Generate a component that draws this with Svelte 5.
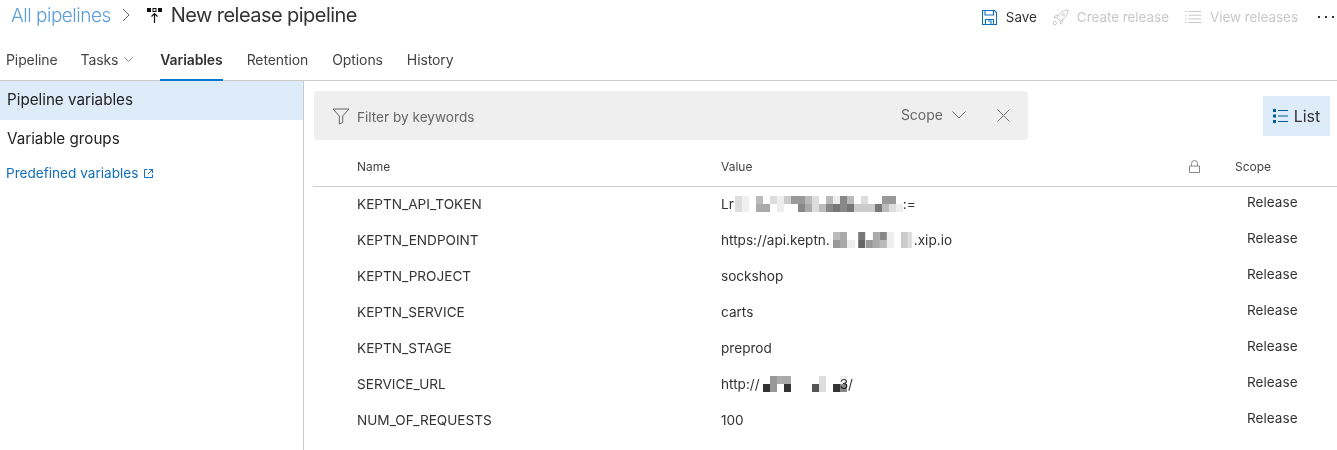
<script>
	// one mosaic cell per entry: [column, row, grey, optional width]
	const cell = 7;

	const tokenMask = [
		[0,0,'#ddd'],[1,0,'#f0f0f0'],[3,0,'#bbb'],[5,0,'#ddd'],[6,0,'#eee'],[7,0,'#ccc'],[8,0,'#999'],[9,0,'#999'],[10,0,'#bbb'],[11,0,'#ddd'],[13,0,'#bbb'],[14,0,'#eee'],[15,0,'#888'],[16,0,'#bbb'],[18,0,'#ddd'],[21,0,'#999'],[22,0,'#999'],
		[0,1,'#ddd'],[1,1,'#f0f0f0'],[3,1,'#aaa'],[4,1,'#aaa'],[6,1,'#eee'],[9,1,'#888'],[10,1,'#aaa'],[11,1,'#ddd'],[12,1,'#bbb'],[13,1,'#888'],[14,1,'#777'],[15,1,'#888'],[16,1,'#777'],[17,1,'#ccc'],[18,1,'#ccc'],[19,1,'#ccc'],[20,1,'#777'],[21,1,'#bbb'],[22,1,'#ddd'],[23,1,'#eee']
	];
	const endpointMask = [
		[0,0,'#bbb'],[1,0,'#aaa'],[3.6,0,'#777'],[5.7,0,'#aaa'],[6.7,0,'#888'],[7.7,0,'#eee'],[9.7,0,'#ccc'],[10.7,0,'#ddd',4],
		[0,1,'#999'],[1,1,'#aaa'],[2,1,'#eee'],[2.6,1,'#eee',4],[3.6,1,'#666'],[4.7,1,'#999'],[5.7,1,'#aaa'],[6.7,1,'#bbb'],[7.7,1,'#eee'],[9.7,1,'#ccc'],[10.7,1,'#ddd',4]
	];
	const urlMask = [
		[1,0,'#999'],[2,0,'#aaa'],[3,0,'#aaa'],[8,0,'#ddd'],[11,0,'#eee'],
		[0,1,'#333'],[1,1,'#999'],[3,1,'#333'],[7,1,'#555'],[8,1,'#ddd'],[10,1,'#333'],[11,1,'#888']
	];

	const rows = [
		{ name: 'KEPTN_API_TOKEN', before: 'Lr', mask: tokenMask, width: 168, lead: 1, after: ':=' },
		{ name: 'KEPTN_ENDPOINT', before: 'https://api.keptn.', mask: endpointMask, width: 81, lead: 3, after: '.xip.io' },
		{ name: 'KEPTN_PROJECT', before: 'sockshop' },
		{ name: 'KEPTN_SERVICE', before: 'carts' },
		{ name: 'KEPTN_STAGE', before: 'preprod' },
		{ name: 'SERVICE_URL', before: 'http://', mask: urlMask, width: 77, lead: 3, after: '3/' },
		{ name: 'NUM_OF_REQUESTS', before: '100' }
	];
</script>

<div class="page">
	<header class="top">
		<div class="crumbs">
			<a class="all">All pipelines</a>
			<svg class="sep" width="8" height="14" viewBox="0 0 8 14"><path d="M1 1l6 6-6 6" fill="none" stroke="#666" stroke-width="1"/></svg>
			<svg class="pipe-icon" width="15" height="15" viewBox="0 0 15 15">
				<path d="M0 0h4v4H0zM5.500 0h4v4h-4zM11 0h4v4h-4z" fill="#111"/>
				<path d="M6.500 1h2v2h-2z" fill="#fff"/>
				<path d="M7.500 15V6M4.500 8.500l3-3 3 3" fill="none" stroke="#111" stroke-width="1.200"/>
			</svg>
			<h1>New release pipeline</h1>
		</div>
		<div class="actions">
			<button class="act">
				<svg width="15" height="15" viewBox="0 0 15 15" fill="none" stroke="#106ebe" stroke-width="1.100">
					<path d="M.5.500h12l2 2v12H.5z"/>
					<path d="M3 .500v4.500h8.500V.500M3.500 14.500V9.500h8v5M6 11h3v3.500"/>
				</svg>
				<span>Save</span>
			</button>
			<button class="act off">
				<svg width="17" height="17" viewBox="0 0 17 17" fill="none" stroke="#c8c8c8" stroke-width="1">
					<path d="M16 1c-4 .2-7 1.800-9.500 5.200L4.800 8.800l3.400 3.400 2.600-1.700C14.200 8 15.800 5 16 1z"/>
					<circle cx="11.300" cy="5.700" r="1.200"/>
					<path d="M6.500 6.200 3.500 6.500 2 8.500l2.800.3M10.800 10.500l-.3 3-2 1.500-.3-2.800"/>
					<circle cx="2.800" cy="14.200" r="1.700"/>
				</svg>
				<span>Create release</span>
			</button>
			<button class="act off">
				<svg width="16" height="12" viewBox="0 0 16 12" stroke="#c8c8c8" stroke-width="1">
					<path d="M0 .5h1.500M3.500.5H16M0 4.200h1.500M3.500 4.200H16M0 7.900h1.500M3.500 7.900H16M0 11.500h1.500M3.500 11.500H16"/>
				</svg>
				<span>View releases</span>
			</button>
			<div class="dots"><i></i><i></i><i></i></div>
		</div>
	</header>

	<nav class="tabs">
		<a class="tab first">Pipeline</a>
		<a class="tab tasks">Tasks
			<svg width="9" height="5" viewBox="0 0 9 5"><path d="M.5.500l4 4 4-4" fill="none" stroke="#888" stroke-width="1"/></svg>
		</a>
		<a class="tab active">Variables</a>
		<a class="tab">Retention</a>
		<a class="tab">Options</a>
		<a class="tab">History</a>
	</nav>

	<div class="body">
		<aside class="side">
			<div class="side-item selected">Pipeline variables</div>
			<div class="side-item">Variable groups</div>
			<a class="predef">Predefined variables
				<svg width="9" height="9" viewBox="0 0 9 9" fill="none" stroke="#106ebe" stroke-width="1"><path d="M3.500.500H.5v8h8v-3M5 .500h3.500V4M8.500.500 4 5"/></svg>
			</a>
		</aside>

		<main class="content">
			<div class="toolbar">
				<div class="filter">
					<svg width="18" height="18" viewBox="0 0 18 18" fill="none" stroke="#666" stroke-width="1"><path d="M1 2h16l-6.300 7v6.500l-3.400 1.500V9z"/></svg>
					<span class="placeholder">Filter by keywords</span>
					<span class="scope-pick">Scope
						<svg width="14" height="8" viewBox="0 0 14 8"><path d="M.5.500 7 7l6.500-6.500" fill="none" stroke="#666" stroke-width="1"/></svg>
					</span>
					<svg class="close" width="13" height="13" viewBox="0 0 13 13"><path d="m.5.500 12 12m0-12-12 12" fill="none" stroke="#777" stroke-width="1"/></svg>
				</div>
				<button class="list">
					<svg width="15" height="14" viewBox="0 0 15 14" fill="#005a9e">
						<path d="M0 0h3v3H0zM0 5.500h3v3H0zM0 11h3v3H0zM5 1h10v1H5zM5 6.500h10v1H5zM5 12h10v1H5z"/>
					</svg>
					List
				</button>
			</div>

			<div class="table">
				<div class="row head">
					<span class="c-name">Name</span>
					<span class="c-value">Value</span>
					<span class="c-lock">
						<svg width="11" height="13" viewBox="0 0 11 13" fill="none" stroke="#888" stroke-width="1"><path d="M.5 6h10v6.500H.5zM2.500 6V3.500a3 3 0 0 1 6 0V6"/></svg>
					</span>
					<span class="c-scope">Scope</span>
				</div>
				<div class="rows">
					{#each rows as row}
						<div class="row">
							<span class="c-name">{row.name}</span>
							<span class="c-value">{row.before}{#if row.mask}<svg class="mask" width={row.width + row.lead} height="16" viewBox="0 0 {row.width + row.lead} 16">{#each row.mask as m}<rect x={row.lead + m[0] * cell} y={m[1] * 8} width={m[3] ?? cell} height="8" fill={m[2]}/>{/each}</svg>{/if}{row.after ?? ''}</span>
							<span class="c-lock"></span>
							<span class="c-release">Release</span>
						</div>
					{/each}
				</div>
			</div>
		</main>
	</div>
</div>

<style>
	:global(body) {
		margin: 0;
		background: #fff;
		font-family: Inter, "Liberation Sans", sans-serif;
		color: #333;
	}

	.page {
		height: 450px;
		display: flex;
		flex-direction: column;
		overflow: hidden;
	}

	.top {
		height: 30px;
		display: flex;
		align-items: center;
		justify-content: space-between;
		padding-left: 11px;
	}

	.crumbs {
		display: flex;
		align-items: center;
	}

	.all {
		font-size: 19px;
		font-weight: 300;
		letter-spacing: -0.5px;
		color: #5c9fd8;
	}

	.sep {
		margin-left: 11px;
	}

	.pipe-icon {
		margin-left: 17px;
	}

	h1 {
		margin: 0 0 0 9px;
		font-size: 20px;
		font-weight: 400;
		letter-spacing: -0.55px;
		color: #333;
	}

	.actions {
		display: flex;
		align-items: center;
		margin-top: 4px;
		padding-right: 3px;
	}

	.act {
		display: flex;
		align-items: center;
		gap: 9px;
		margin: 0 16px 0 0;
		padding: 0;
		border: 0;
		background: none;
		font: inherit;
		font-size: 13.4px;
		color: #333;
	}

	.act.off {
		color: #c8c8c8;
	}

	.act:nth-child(1) {
		margin-right: 15px;
	}

	.act:nth-child(2) {
		gap: 8px;
	}

	.act:nth-child(3) {
		margin-right: 20px;
	}

	.dots {
		display: flex;
		gap: 5px;
	}

	.dots i {
		width: 2px;
		height: 2px;
		background: #333;
	}

	.tabs {
		height: 51px;
		box-sizing: border-box;
		display: flex;
		align-items: stretch;
		gap: 24px;
		padding: 10px 0 0 6px;
		border-bottom: 1px solid #ccc;
	}

	.tab {
		display: flex;
		align-items: center;
		gap: 6px;
		font-size: 14px;
		letter-spacing: -0.1px;
		color: #444;
		border-bottom: 2px solid transparent;
		margin-bottom: -1px;
	}

	.tab.first {
		margin-right: -1px;
	}

	.tab.tasks {
		margin-right: 3px;
	}

	.tab.active {
		font-weight: 600;
		color: #333;
		border-bottom-color: #0078d4;
	}

	.body {
		flex: 1;
		display: flex;
		min-height: 0;
	}

	.side {
		width: 303px;
		flex: none;
		border-right: 1px solid #ccc;
	}

	.side-item {
		height: 39px;
		box-sizing: border-box;
		padding: 0 0 2px 7px;
		display: flex;
		align-items: center;
		font-size: 15.2px;
		color: #222;
	}

	.side-item.selected {
		background: #deecf9;
	}

	.predef {
		display: flex;
		align-items: center;
		gap: 6px;
		padding: 6px 0 0 6px;
		font-size: 13.6px;
		color: #106ebe;
	}

	.content {
		flex: 1;
		min-width: 0;
		padding-left: 9px;
	}

	.toolbar {
		display: flex;
		align-items: center;
		justify-content: space-between;
		padding: 10px 7px 0 1px;
	}

	.filter {
		width: 714px;
		height: 49px;
		box-sizing: border-box;
		display: flex;
		align-items: center;
		padding: 0 18px;
		background: #efefef;
		border-radius: 4px;
	}

	.placeholder {
		margin-left: 7px;
		flex: 1;
		font-size: 13.6px;
		color: #666;
		padding-top: 3px;
	}

	.scope-pick {
		display: flex;
		align-items: center;
		gap: 9px;
		padding-bottom: 2px;
		font-size: 14px;
		color: #666;
	}

	.close {
		margin-left: 31px;
	}

	.list {
		width: 67px;
		height: 40px;
		display: flex;
		align-items: center;
		justify-content: center;
		gap: 6px;
		padding: 0;
		border: 0;
		background: #deecf9;
		font: inherit;
		font-size: 16px;
		color: #333;
	}

	.table {
		margin-top: 6px;
	}

	.rows {
		margin-top: -1px;
	}

	.row {
		display: grid;
		grid-template-columns: 44px 364px 468px 46px 1fr;
		height: 36px;
		align-items: center;
		font-size: 13.6px;
		color: #333;
	}

	.row.head {
		height: 40px;
		font-size: 12px;
		color: #444;
		border-bottom: 1px solid #ccc;
	}

	.c-name {
		grid-column: 2;
	}

	.c-value {
		grid-column: 3;
		display: flex;
		align-items: center;
		white-space: pre;
	}

	.c-lock {
		grid-column: 4;
		display: flex;
	}

	.c-scope {
		grid-column: 5;
	}

	.c-release {
		grid-column: 5;
		padding: 0 0 4px 12px;
	}

	.mask {
		flex: none;
		overflow: visible;
		mix-blend-mode: multiply;
	}
</style>
